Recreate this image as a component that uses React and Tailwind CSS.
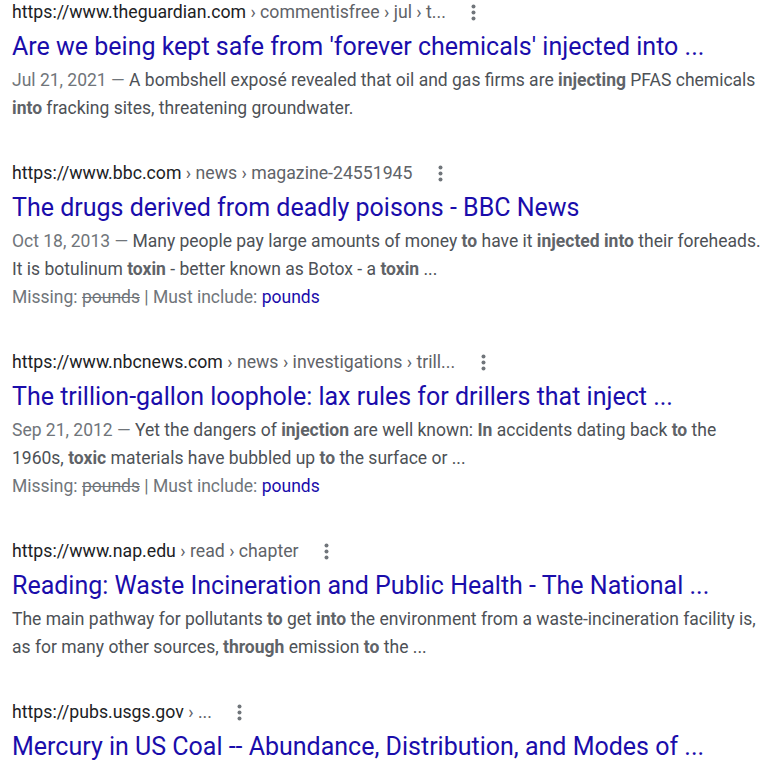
const results = [
  {
    host: "https://www.theguardian.com",
    crumbs: " › commentisfree › jul › t...",
    title: "Are we being kept safe from 'forever chemicals' injected into ...",
    date: "Jul 21, 2021",
    snippet: [
      ["A bombshell exposé revealed that oil and gas firms are "],
      ["injecting", true],
      [" PFAS chemicals "],
      ["into", true],
      [" fracking sites, threatening groundwater."],
    ],
  },
  {
    host: "https://www.bbc.com",
    crumbs: " › news › magazine-24551945",
    title: "The drugs derived from deadly poisons - BBC News",
    date: "Oct 18, 2013",
    snippet: [
      ["Many people pay large amounts of money "],
      ["to", true],
      [" have it "],
      ["injected into", true],
      [" their foreheads. It is botulinum "],
      ["toxin", true],
      [" - better known as Botox - a "],
      ["toxin", true],
      [" ..."],
    ],
    missing: true,
  },
  {
    host: "https://www.nbcnews.com",
    crumbs: " › news › investigations › trill...",
    title: "The trillion-gallon loophole: lax rules for drillers that inject ...",
    date: "Sep 21, 2012",
    snippet: [
      ["Yet the dangers of "],
      ["injection", true],
      [" are well known: "],
      ["In", true],
      [" accidents dating back "],
      ["to", true],
      [" the 1960s, "],
      ["toxic", true],
      [" materials have bubbled up "],
      ["to", true],
      [" the surface or ..."],
    ],
    missing: true,
  },
  {
    host: "https://www.nap.edu",
    crumbs: " › read › chapter",
    title: "Reading: Waste Incineration and Public Health - The National ...",
    snippet: [
      ["The main pathway for pollutants "],
      ["to", true],
      [" get "],
      ["into", true],
      [" the environment from a waste-incineration facility is, as for many other sources, "],
      ["through", true],
      [" emission "],
      ["to", true],
      [" the ..."],
    ],
  },
  {
    host: "https://pubs.usgs.gov",
    crumbs: " › ...",
    title: "Mercury in US Coal -- Abundance, Distribution, and Modes of ...",
  },
];

function Dots() {
  return (
    <span className="ml-[16px] flex h-6 w-6 items-center justify-center">
      <svg width="5" height="17" viewBox="0 0 5 17" fill="#70757a">
        <circle cx="2.5" cy="2.5" r="2" />
        <circle cx="2.5" cy="8.5" r="2" />
        <circle cx="2.5" cy="14.5" r="2" />
      </svg>
    </span>
  );
}

function Result({ r }) {
  return (
    <div className="mb-[39px]">
      <div className="flex h-6 items-center text-[17.7px] leading-6">
        <span className="text-[#202124]">{r.host}</span>
        <span className="whitespace-pre text-[#5f6368]">{r.crumbs}</span>
        <Dots />
      </div>
      <h3 className="mt-2 whitespace-nowrap text-[25px] leading-[30px] text-[#1a0dab]">
        {r.title}
      </h3>
      {r.snippet && (
        <div className="mt-1 text-[17.5px] leading-[28px] text-[#4d5156]">
          {r.date && <span className="text-[#70757a]">{r.date} — </span>}
          {r.snippet.map(([t, b], i) =>
            b ? (
              <b key={i} className="font-bold text-[#5f6368]">
                {t}
              </b>
            ) : (
              <span key={i}>{t}</span>
            )
          )}
        </div>
      )}
      {r.missing && (
        <div className="text-[17.5px] leading-[28px] text-[#70757a]">
          Missing: <s>pounds</s> | Must include:{" "}
          <span className="text-[#1a0dab]">pounds</span>
        </div>
      )}
    </div>
  );
}

export default function App() {
  return (
    <div
      className="h-[762px] overflow-hidden bg-white pl-3 pr-3"
      style={{ fontFamily: "Roboto, Arial, sans-serif" }}
    >
      {results.map((r) => (
        <Result key={r.host} r={r} />
      ))}
    </div>
  );
}
